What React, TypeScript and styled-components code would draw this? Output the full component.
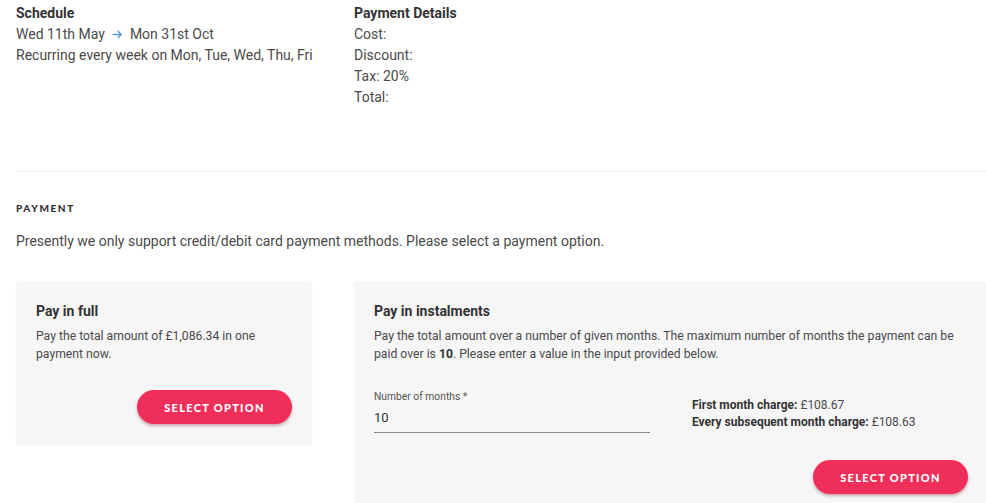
import React from "react";
import styled, { createGlobalStyle } from "styled-components";

const Global = createGlobalStyle`
  html, body { margin: 0; padding: 0; background: #ffffff; }
  body { font-family: Roboto, "Liberation Sans", Arial, sans-serif; color: #3d3d3d; -webkit-font-smoothing: antialiased; }
  * { box-sizing: border-box; }
`;

const Page = styled.div`
  width: 986px;
  padding: 3px 0 0 16px;
`;

const Columns = styled.div`
  display: grid;
  grid-template-columns: 296px 632px;
  column-gap: 42px;
  align-items: start;
`;

const InfoBlock = styled.div`
  font-size: 14px;
  line-height: 21px;
  color: #4a4a4a;
  white-space: nowrap;
`;

const InfoTitle = styled.div`
  font-weight: 700;
  color: #333;
`;

const DateLine = styled.div`
  display: flex;
  align-items: center;
  gap: 6px;
`;

const Arrow = styled.svg`
  width: 13px;
  height: 13px;
  color: #5b9bd6;
`;

const Divider = styled.hr`
  border: 0;
  height: 1px;
  background: #ececec;
  margin: 63px 0 0 0;
`;

const SectionLabel = styled.h2`
  margin: 29px 0 0 0;
  font-family: Lato, "Noto Sans", sans-serif;
  font-weight: 900;
  font-size: 10px;
  line-height: 14px;
  letter-spacing: 1.6px;
  text-transform: uppercase;
  color: #2f2f2f;
`;

const Intro = styled.p`
  margin: 16px 0 0 0;
  font-size: 14px;
  line-height: 21px;
  color: #4a4a4a;
`;

const Cards = styled(Columns)`
  margin-top: 30px;
`;

const Card = styled.section<{ $tall?: boolean }>`
  background: #f6f6f7;
  border-radius: 3px;
  box-shadow: 0 0 2px rgba(0, 0, 0, 0.04);
  padding: 20px 20px 21px 20px;
  display: flex;
  flex-direction: column;
  ${(p) => (p.$tall ? "padding-right: 18px; min-height: 240px;" : "")}
`;

const CardTitle = styled.h3`
  margin: 0;
  font-size: 14px;
  line-height: 18px;
  font-weight: 700;
  color: #333;
`;

const CardText = styled.p`
  margin: 7px 0 0 0;
  font-size: 12.2px;
  line-height: 18px;
  color: #4a4a4a;
  b { color: #333; }
`;

const Actions = styled.div`
  display: flex;
  justify-content: flex-end;
  margin-top: 27px;
`;

const SelectButton = styled.button`
  width: 155px;
  height: 34px;
  border: 0;
  border-radius: 17px;
  background: #ef2f5a;
  color: #fff;
  font-family: Lato, "Noto Sans", sans-serif;
  font-weight: 900;
  font-size: 11px;
  letter-spacing: 1.3px;
  text-transform: uppercase;
  box-shadow: 0 2px 3px rgba(120, 20, 40, 0.35);
  cursor: pointer;
`;

const FormRow = styled.div`
  display: flex;
  align-items: center;
  gap: 42px;
  margin-top: 28px;
`;

const Field = styled.label`
  display: flex;
  flex-direction: column;
  width: 276px;
  border-bottom: 1.5px solid #8a8a8a;
  padding-bottom: 4px;
`;

const FieldLabel = styled.span`
  font-size: 10.3px;
  line-height: 12px;
  color: #555;
`;

const FieldInput = styled.input`
  margin-top: 5px;
  border: 0;
  background: transparent;
  padding: 0;
  font-family: inherit;
  font-size: 13px;
  line-height: 20px;
  color: #333;
  outline: none;
`;

const Charges = styled.div`
  font-size: 12px;
  line-height: 17px;
  color: #4a4a4a;
  margin-top: 4px;
  b { color: #333; }
`;

export default function App() {
  return (
    <>
      <Global />
      <Page>
        <Columns>
          <InfoBlock>
            <InfoTitle>Schedule</InfoTitle>
            <DateLine>
              Wed 11th May
              <Arrow viewBox="0 0 24 24" fill="none" stroke="currentColor" strokeWidth="2.5" strokeLinecap="round" strokeLinejoin="round">
                <path d="M4 12h15M13 6l6 6-6 6" />
              </Arrow>
              Mon 31st Oct
            </DateLine>
            <div>Recurring every week on Mon, Tue, Wed, Thu, Fri</div>
          </InfoBlock>
          <InfoBlock>
            <InfoTitle>Payment Details</InfoTitle>
            <div>Cost:</div>
            <div>Discount:</div>
            <div>Tax: 20%</div>
            <div>Total:</div>
          </InfoBlock>
        </Columns>
        <Divider />
        <SectionLabel>Payment</SectionLabel>
        <Intro>Presently we only support credit/debit card payment methods. Please select a payment option.</Intro>
        <Cards>
          <Card>
            <CardTitle>Pay in full</CardTitle>
            <CardText>Pay the total amount of £1,086.34 in one payment now.</CardText>
            <Actions>
              <SelectButton>Select option</SelectButton>
            </Actions>
          </Card>
          <Card $tall>
            <CardTitle>Pay in instalments</CardTitle>
            <CardText>
              Pay the total amount over a number of given months. The maximum number of months the payment can be
              paid over is <b>10</b>. Please enter a value in the input provided below.
            </CardText>
            <FormRow>
              <Field>
                <FieldLabel>Number of months *</FieldLabel>
                <FieldInput defaultValue="10" />
              </Field>
              <Charges>
                <div><b>First month charge:</b> £108.67</div>
                <div><b>Every subsequent month charge:</b> £108.63</div>
              </Charges>
            </FormRow>
            <Actions>
              <SelectButton>Select option</SelectButton>
            </Actions>
          </Card>
        </Cards>
      </Page>
    </>
  );
}
